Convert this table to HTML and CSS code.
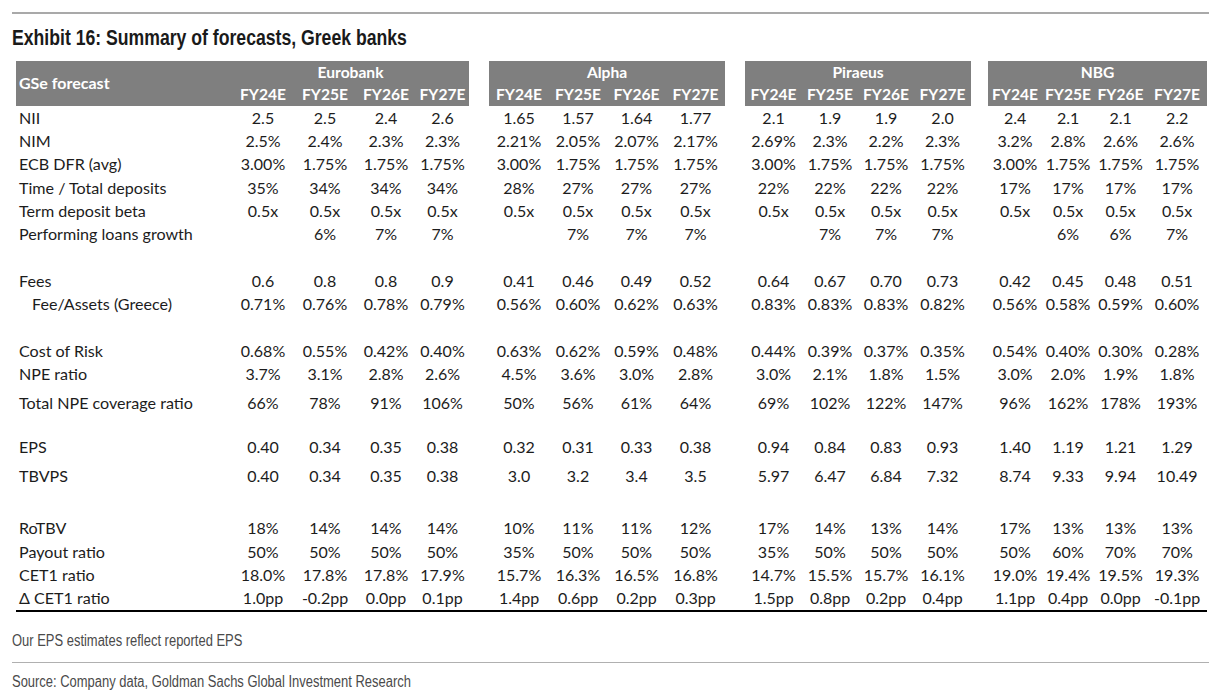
FILE: index.html
```html
<!DOCTYPE html>
<html>
<head>
<meta charset="utf-8">
<link rel="stylesheet" href="styles.css">
</head>
<body>
<div class="page">
  <div class="rule"></div>
  <h1 class="title"><span class="narrow">Exhibit 16: Summary of forecasts, Greek banks</span></h1>
  <table class="fc">
    <colgroup>
      <col class="c-label">
      <col class="w62"><col class="w62"><col class="w60"><col class="w53">
      <col class="w20">
      <col class="w60"><col class="w58"><col class="w59"><col class="w59">
      <col class="w20">
      <col class="w57"><col class="w56"><col class="w56"><col class="w57">
      <col class="w17">
      <col class="w54"><col class="w52"><col class="w53"><col class="w60">
    </colgroup>
    <thead>
      <tr class="h1">
        <th class="lab" rowspan="2">GSe forecast</th>
        <th colspan="4">Eurobank</th>
        <th class="gap"></th>
        <th colspan="4">Alpha</th>
        <th class="gap"></th>
        <th colspan="4">Piraeus</th>
        <th class="gap"></th>
        <th colspan="4">NBG</th>
      </tr>
      <tr class="h2">
        <th>FY24E</th><th>FY25E</th><th>FY26E</th><th>FY27E</th><th class="gap"></th>
        <th>FY24E</th><th>FY25E</th><th>FY26E</th><th>FY27E</th><th class="gap"></th>
        <th>FY24E</th><th>FY25E</th><th>FY26E</th><th>FY27E</th><th class="gap"></th>
        <th>FY24E</th><th>FY25E</th><th>FY26E</th><th>FY27E</th>
      </tr>
    </thead>
    <tbody>
      <tr><td class="lab">NII</td><td>2.5</td><td>2.5</td><td>2.4</td><td>2.6</td><td></td><td>1.65</td><td>1.57</td><td>1.64</td><td>1.77</td><td></td><td>2.1</td><td>1.9</td><td>1.9</td><td>2.0</td><td></td><td>2.4</td><td>2.1</td><td>2.1</td><td>2.2</td></tr>
      <tr><td class="lab">NIM</td><td>2.5%</td><td>2.4%</td><td>2.3%</td><td>2.3%</td><td></td><td>2.21%</td><td>2.05%</td><td>2.07%</td><td>2.17%</td><td></td><td>2.69%</td><td>2.3%</td><td>2.2%</td><td>2.3%</td><td></td><td>3.2%</td><td>2.8%</td><td>2.6%</td><td>2.6%</td></tr>
      <tr><td class="lab">ECB DFR (avg)</td><td>3.00%</td><td>1.75%</td><td>1.75%</td><td>1.75%</td><td></td><td>3.00%</td><td>1.75%</td><td>1.75%</td><td>1.75%</td><td></td><td>3.00%</td><td>1.75%</td><td>1.75%</td><td>1.75%</td><td></td><td>3.00%</td><td>1.75%</td><td>1.75%</td><td>1.75%</td></tr>
      <tr><td class="lab">Time / Total deposits</td><td>35%</td><td>34%</td><td>34%</td><td>34%</td><td></td><td>28%</td><td>27%</td><td>27%</td><td>27%</td><td></td><td>22%</td><td>22%</td><td>22%</td><td>22%</td><td></td><td>17%</td><td>17%</td><td>17%</td><td>17%</td></tr>
      <tr><td class="lab">Term deposit beta</td><td>0.5x</td><td>0.5x</td><td>0.5x</td><td>0.5x</td><td></td><td>0.5x</td><td>0.5x</td><td>0.5x</td><td>0.5x</td><td></td><td>0.5x</td><td>0.5x</td><td>0.5x</td><td>0.5x</td><td></td><td>0.5x</td><td>0.5x</td><td>0.5x</td><td>0.5x</td></tr>
      <tr><td class="lab">Performing loans growth</td><td></td><td>6%</td><td>7%</td><td>7%</td><td></td><td></td><td>7%</td><td>7%</td><td>7%</td><td></td><td></td><td>7%</td><td>7%</td><td>7%</td><td></td><td></td><td>6%</td><td>6%</td><td>7%</td></tr>
      <tr class="blank"><td colspan="20"></td></tr>
      <tr><td class="lab">Fees</td><td>0.6</td><td>0.8</td><td>0.8</td><td>0.9</td><td></td><td>0.41</td><td>0.46</td><td>0.49</td><td>0.52</td><td></td><td>0.64</td><td>0.67</td><td>0.70</td><td>0.73</td><td></td><td>0.42</td><td>0.45</td><td>0.48</td><td>0.51</td></tr>
      <tr><td class="lab sub">Fee/Assets (Greece)</td><td>0.71%</td><td>0.76%</td><td>0.78%</td><td>0.79%</td><td></td><td>0.56%</td><td>0.60%</td><td>0.62%</td><td>0.63%</td><td></td><td>0.83%</td><td>0.83%</td><td>0.83%</td><td>0.82%</td><td></td><td>0.56%</td><td>0.58%</td><td>0.59%</td><td>0.60%</td></tr>
      <tr class="blank"><td colspan="20"></td></tr>
      <tr><td class="lab">Cost of Risk</td><td>0.68%</td><td>0.55%</td><td>0.42%</td><td>0.40%</td><td></td><td>0.63%</td><td>0.62%</td><td>0.59%</td><td>0.48%</td><td></td><td>0.44%</td><td>0.39%</td><td>0.37%</td><td>0.35%</td><td></td><td>0.54%</td><td>0.40%</td><td>0.30%</td><td>0.28%</td></tr>
      <tr><td class="lab">NPE ratio</td><td>3.7%</td><td>3.1%</td><td>2.8%</td><td>2.6%</td><td></td><td>4.5%</td><td>3.6%</td><td>3.0%</td><td>2.8%</td><td></td><td>3.0%</td><td>2.1%</td><td>1.8%</td><td>1.5%</td><td></td><td>3.0%</td><td>2.0%</td><td>1.9%</td><td>1.8%</td></tr>
      <tr class="pt6"><td class="lab">Total NPE coverage ratio</td><td>66%</td><td>78%</td><td>91%</td><td>106%</td><td></td><td>50%</td><td>56%</td><td>61%</td><td>64%</td><td></td><td>69%</td><td>102%</td><td>122%</td><td>147%</td><td></td><td>96%</td><td>162%</td><td>178%</td><td>193%</td></tr>
      <tr class="pt20"><td class="lab">EPS</td><td>0.40</td><td>0.34</td><td>0.35</td><td>0.38</td><td></td><td>0.32</td><td>0.31</td><td>0.33</td><td>0.38</td><td></td><td>0.94</td><td>0.84</td><td>0.83</td><td>0.93</td><td></td><td>1.40</td><td>1.19</td><td>1.21</td><td>1.29</td></tr>
      <tr class="pt6"><td class="lab">TBVPS</td><td>0.40</td><td>0.34</td><td>0.35</td><td>0.38</td><td></td><td>3.0</td><td>3.2</td><td>3.4</td><td>3.5</td><td></td><td>5.97</td><td>6.47</td><td>6.84</td><td>7.32</td><td></td><td>8.74</td><td>9.33</td><td>9.94</td><td>10.49</td></tr>
      <tr class="pt29"><td class="lab">RoTBV</td><td>18%</td><td>14%</td><td>14%</td><td>14%</td><td></td><td>10%</td><td>11%</td><td>11%</td><td>12%</td><td></td><td>17%</td><td>14%</td><td>13%</td><td>14%</td><td></td><td>17%</td><td>13%</td><td>13%</td><td>13%</td></tr>
      <tr><td class="lab">Payout ratio</td><td>50%</td><td>50%</td><td>50%</td><td>50%</td><td></td><td>35%</td><td>50%</td><td>50%</td><td>50%</td><td></td><td>35%</td><td>50%</td><td>50%</td><td>50%</td><td></td><td>50%</td><td>60%</td><td>70%</td><td>70%</td></tr>
      <tr><td class="lab">CET1 ratio</td><td>18.0%</td><td>17.8%</td><td>17.8%</td><td>17.9%</td><td></td><td>15.7%</td><td>16.3%</td><td>16.5%</td><td>16.8%</td><td></td><td>14.7%</td><td>15.5%</td><td>15.7%</td><td>16.1%</td><td></td><td>19.0%</td><td>19.4%</td><td>19.5%</td><td>19.3%</td></tr>
      <tr class="last"><td class="lab">&Delta; CET1 ratio</td><td>1.0pp</td><td>-0.2pp</td><td>0.0pp</td><td>0.1pp</td><td></td><td>1.4pp</td><td>0.6pp</td><td>0.2pp</td><td>0.3pp</td><td></td><td>1.5pp</td><td>0.8pp</td><td>0.2pp</td><td>0.4pp</td><td></td><td>1.1pp</td><td>0.4pp</td><td>0.0pp</td><td>-0.1pp</td></tr>
    </tbody>
  </table>
  <p class="note"><span class="narrow">Our EPS estimates reflect reported EPS</span></p>
  <div class="rule rule-foot"></div>
  <p class="source"><span class="narrow">Source: Company data, Goldman Sachs Global Investment Research</span></p>
</div>
</body>
</html>
```

FILE: styles.css
```css
html, body {
  margin: 0;
  padding: 0;
  background: #ffffff;
}

.page {
  width: 1197px;
  padding: 12px 0 0 12px;
}

.rule {
  height: 0;
  border-top: 2px solid #a9a9a9;
}

/* Arial Narrow look: Liberation Sans compressed horizontally */
.narrow {
  display: inline-block;
  white-space: nowrap;
  transform: scaleX(0.82);
  transform-origin: 0 50%;
}

.title {
  margin: 0;
  height: 47px;
  padding-top: 12px;
  box-sizing: border-box;
  font-family: "Liberation Sans", Arial, sans-serif;
  font-weight: bold;
  font-size: 21.5px;
  line-height: 24px;
  color: #1a1a1a;
}

.fc {
  margin-left: 4px;
  width: 1191px;
  table-layout: fixed;
  border-collapse: collapse;
  border-spacing: 0;
  font-family: Lato, "Open Sans", sans-serif;
  font-size: 16px;
  color: #1c1c1c;
}

.c-label { width: 216px; }
.w17 { width: 17px; }
.w20 { width: 20px; }
.w52 { width: 52px; }
.w53 { width: 53px; }
.w54 { width: 54px; }
.w56 { width: 56px; }
.w57 { width: 57px; }
.w58 { width: 58px; }
.w59 { width: 59px; }
.w60 { width: 60px; }
.w62 { width: 62px; }

.fc th {
  background: #7f7f7f;
  color: #ffffff;
  font-weight: bold;
  font-size: 15.6px;
  height: 22.4px;
  line-height: 22.4px;
  padding: 0;
  text-align: center;
  white-space: nowrap;
  overflow: visible;
}

.fc th.gap {
  background: #ffffff;
}

.fc th.lab {
  text-align: left;
  padding-left: 3px;
  font-size: 16px;
  vertical-align: middle;
}

.fc td {
  padding: 0;
  line-height: 23.3px;
  text-align: center;
  vertical-align: bottom;
  white-space: nowrap;
}

.fc td.lab {
  text-align: left;
  padding-left: 3px;
  font-size: 16.1px;
}

.fc td.sub {
  padding-left: 16px;
}

.fc tr.blank td {
  height: 23.3px;
}

.fc tr.pt6 td { padding-top: 6px; }
.fc tr.pt20 td { padding-top: 20.4px; }
.fc tr.pt29 td { padding-top: 28.7px; }

.fc tr.last td {
  border-bottom: 2px solid #000000;
}

.note, .source {
  margin: 0;
  font-family: "Liberation Sans", Arial, sans-serif;
  font-size: 15.8px;
  color: #4a4a4a;
}

.note {
  line-height: 18px;
  padding-top: 20px;
  height: 50px;
  box-sizing: border-box;
}

.rule-foot {
  border-top-width: 1px;
  border-top-color: #b0b0b0;
}

.source {
  line-height: 18px;
  padding-top: 10px;
}
```
